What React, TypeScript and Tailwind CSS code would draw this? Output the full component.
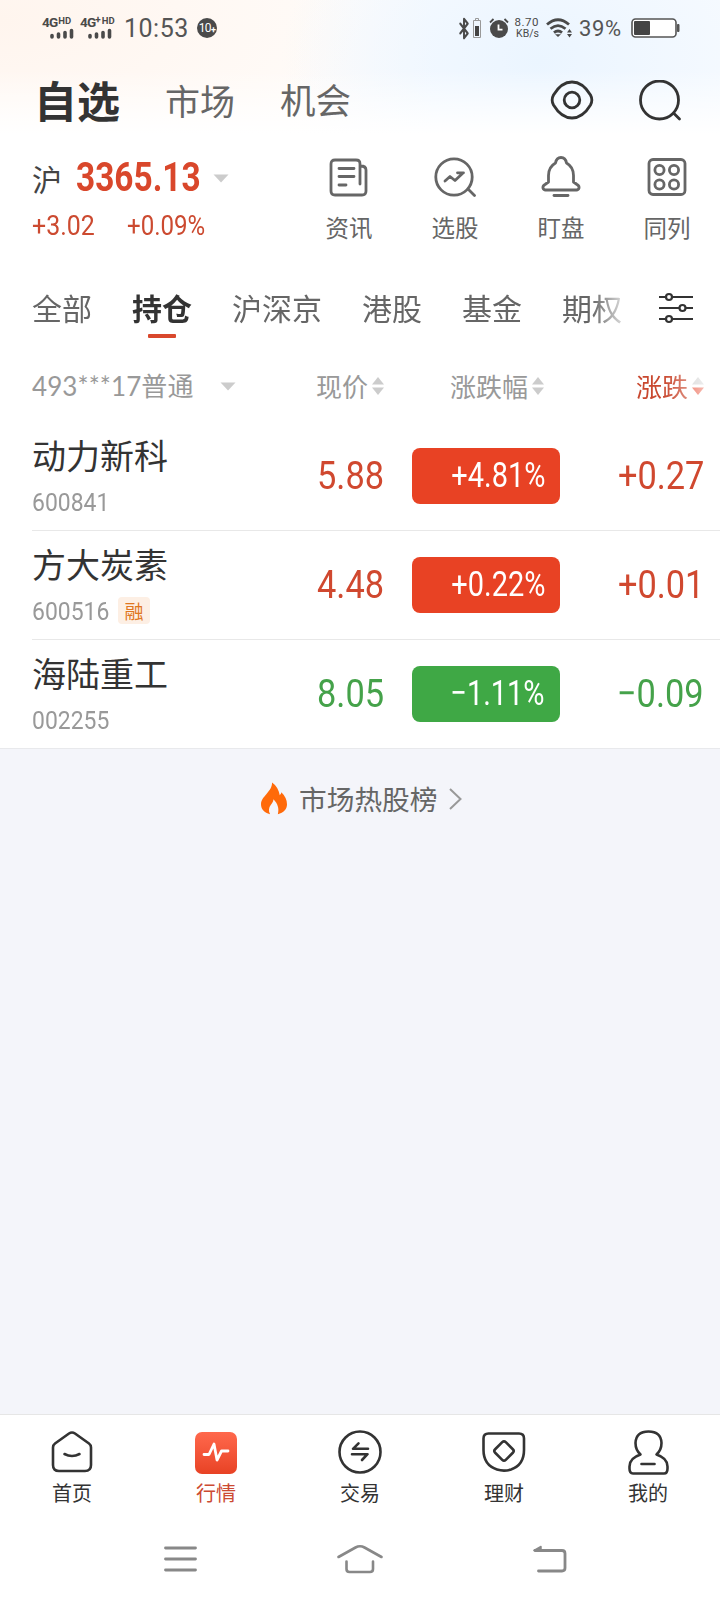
import { Bluetooth } from 'lucide-react';

const TABS = ['全部', '持仓', '沪深京', '港股', '基金', '期权'];

const STOCKS = [
  { name: '动力新科', code: '600841', price: '5.88', percent: '+4.81%', change: '+0.27', up: true, margin: false },
  { name: '方大炭素', code: '600516', price: '4.48', percent: '+0.22%', change: '+0.01', up: true, margin: true },
  { name: '海陆重工', code: '002255', price: '8.05', percent: '−1.11%', change: '−0.09', up: false, margin: false },
];

export default function App() {
  return (
    <div className="flex flex-col w-[720px] h-[1600px] bg-white overflow-hidden text-[#333] font-['Noto_Sans_CJK_SC',sans-serif] leading-none">
      {/* Top area with the soft tint */}
      <div className="h-[140px] shrink-0 bg-[linear-gradient(to_bottom,transparent_50%,#fff_96%),radial-gradient(ellipse_260px_170px_at_540px_60px,#ebf5ff,transparent),radial-gradient(ellipse_360px_160px_at_0px_20px,#fff5ee,transparent),linear-gradient(to_right,#fffbf8_40%,#f8fbff_60%)]">
        <StatusBar />
        <TopTabs />
      </div>

      <div className="flex h-[130px] shrink-0">
        <IndexSummary />
        <div className="flex">
          <Shortcut label="资讯" icon={<NewsIcon />} />
          <Shortcut label="选股" icon={<PickIcon />} />
          <Shortcut label="盯盘" icon={<BellIcon />} />
          <Shortcut label="同列" icon={<GridIcon />} />
        </div>
      </div>

      {/* Group tabs */}
      <div className="flex h-[78px] shrink-0 pl-8">
        <div className="flex gap-10 w-[590px] overflow-hidden [mask-image:linear-gradient(to_right,#000_560px,transparent_600px)]">
          {TABS.map((tab) => (
            <GroupTab key={tab} label={tab} active={tab === '持仓'} />
          ))}
        </div>
        <svg viewBox="0 0 36 32" className="w-9 h-8 mt-[22px] ml-9" fill="none" stroke="#333" strokeWidth="2.2">
          <path d="M1 5h7M14 5h21M1 16h20.500M27.500 16H35M1 27h7M14 27h21" />
          <circle cx="11" cy="5" r="3" />
          <circle cx="24.500" cy="16" r="3" />
          <circle cx="11" cy="27" r="3" />
        </svg>
      </div>

      {/* Table head */}
      <div className="flex items-center h-[74px] shrink-0 pl-8 pt-0.5 text-[26px] text-[#999]">
        <div className="flex items-center w-[284px]">
          <span className="font-['Lato','Noto_Sans_CJK_SC',sans-serif] w-[188px] tracking-[0.1px]">493***17普通</span>
          <Caret />
        </div>
        <div className="flex items-center gap-1 w-[134px]">现价<SortArrows /></div>
        <div className="flex items-center gap-1 w-[186px]">涨跌幅<SortArrows /></div>
        <div className="flex items-center gap-1 text-[#c9482f] [mask-image:linear-gradient(to_right,#000_28px,rgba(0,0,0,0.35)_70px)]">
          涨跌<SortArrows active />
        </div>
      </div>

      <div className="shrink-0">
        {STOCKS.map((stock, i) => (
          <StockRow key={stock.code} stock={stock} last={i === STOCKS.length - 1} />
        ))}
      </div>

      {/* Hot list entry */}
      <div className="flex-1 bg-[#f4f5fa] border-t border-[#e8e9ec]">
        <div className="flex items-center h-[99px] pl-[261px] text-[27.700px] text-[#666]">
          <svg viewBox="0 0 27 33" className="w-[26px] h-[33px] mr-3">
            <path
              d="M11.500 0C16 3 18.500 8 19.500 13c1.200-1 1.500-1.900 1.600-2.900C25 14 27 18 27 22.500c0 5-3.500 9-9.500 10.300 1.700-6-.3-11-4.500-15.500-.5 3-1.500 4.200-2.900 6-2 2.700-2.500 6-.7 9.500C3.500 31.500 0 27.500 0 22.500 0 18 2.500 15.500 5.500 12 9 8 11.500 5 11.500 0z"
              fill="#ff6a0a"
            />
          </svg>
          市场热股榜
          <svg viewBox="0 0 13 22" className="w-[13px] h-[22px] ml-[12px]" fill="none" stroke="#999" strokeWidth="2">
            <path d="M1 1l10.500 10L1 21" />
          </svg>
        </div>
      </div>

      {/* Bottom nav */}
      <div className="flex h-[100px] shrink-0 border-t border-[#e6e6e6] bg-white">
        <NavItem label="首页" icon={<HomeIcon />} />
        <NavItem label="行情" icon={<MarketIcon />} active />
        <NavItem label="交易" icon={<TradeIcon />} />
        <NavItem label="理财" icon={<WealthIcon />} />
        <NavItem label="我的" icon={<MineIcon />} />
      </div>

      {/* System keys */}
      <div className="flex items-center h-[86px] shrink-0 pl-[162px] pt-[3px]">
        <svg viewBox="0 0 36 30" className="w-9 h-[30px] mr-[137px]" stroke="#888" strokeWidth="2.800" strokeLinecap="round">
          <path d="M3.500 4h30M3.500 15h30M3.500 26h30" />
        </svg>
        <svg viewBox="0 0 50 32" className="w-[50px] h-8 mr-[146px]" fill="none" stroke="#888" strokeWidth="2.600" strokeLinecap="round">
          <path d="M3.500 14L20.500 4.500Q25 2 29.500 4.500L46.500 14" />
          <path d="M11.500 18.500V26q0 3 3 3H35q3 0 3-3v-7.500" />
        </svg>
        <svg viewBox="0 0 36 30" className="w-9 h-[30px]" fill="none" stroke="#888" strokeWidth="2.800" strokeLinecap="round" strokeLinejoin="round">
          <path d="M4 6.500h27q3 0 3 3V24q0 3-3 3H7.500" />
          <path d="M3 6.500L10 2.500v4z" fill="#888" strokeWidth="1.500" />
        </svg>
      </div>
    </div>
  );
}

function StatusBar() {
  return (
    <div className="flex items-center h-14 pl-[42px] text-[#4a4a4a] font-['Roboto',sans-serif]">
      <Signal net="4G" />
      <Signal net="4G⁺" />
      <span className="text-[25px] w-[73px] tracking-[0.5px] text-[#555]">10:53</span>
      <span className="flex items-center justify-center w-5 h-5 rounded-full bg-[#4a4a4a] text-white text-[12px] tracking-tighter">
        10<span className="text-[9px] font-bold mt-1">+</span>
      </span>
      <Bluetooth className="ml-[238px] w-[18px] h-[23px] shrink-0" strokeWidth={2.6} preserveAspectRatio="none" />
      <svg viewBox="0 0 8 20" className="w-2 h-5 shrink-0">
        <path d="M2.500 2V.5h3V2M.5 2.500h7v17h-7z" fill="none" stroke="#999" />
        <path d="M2 8h4v10H2z" fill="#444" />
      </svg>
      <svg viewBox="0 0 20 20" className="w-5 h-5 ml-2 shrink-0">
        <circle cx="10" cy="11" r="9" fill="#4a4a4a" />
        <path d="M1 4.500L4.500 1M19 4.500L15.500 1" stroke="#4a4a4a" strokeWidth="1.800" />
        <path d="M9.500 6.500v5.200h4" stroke="#fff" strokeWidth="1.800" fill="none" />
      </svg>
      <span className="flex flex-col items-end w-[26px] ml-1 text-[11.500px] leading-[11px] shrink-0">
        <span className="tracking-[0.5px]">8.70</span>
        <span className="text-[10.500px]">KB/s</span>
      </span>
      <svg viewBox="0 0 26 20" className="w-[26px] h-5 ml-[7px] shrink-0" fill="none" stroke="#4a4a4a" strokeWidth="2.800">
        <path d="M1 6.500Q12 -3 23 6.500M4.500 10.800Q12 4.500 19.500 10.800M8 14.600Q12 11.300 16 14.600" />
        <path d="M9 16.200h6L12 19z" fill="#4a4a4a" stroke="none" />
        <path d="M21 14.500h5L23.500 11zM21 16h5l-2.500 3.500z" fill="#4a4a4a" stroke="none" />
      </svg>
      <span className="text-[22px] ml-[7px] w-[52px] tracking-[0.6px] text-[#555] shrink-0 mt-0.5">39%</span>
      <svg viewBox="0 0 49 20" className="w-[49px] h-5 shrink-0">
        <rect x="1" y="1" width="44" height="18" rx="3.500" fill="#fff" stroke="#555" strokeWidth="1.600" />
        <rect x="3" y="3" width="16" height="14" rx="1" fill="#444" />
        <path d="M46.500 6.500h1.500v7h-1.500z" fill="#555" stroke="#555" />
      </svg>
    </div>
  );
}

function Signal({ net }: any) {
  const plus = net === '4G⁺';
  return (
    <div className={`flex flex-col h-[22px] ${plus ? 'w-[44px]' : 'w-[38px]'}`}>
      <div className="flex items-start font-bold h-[11px] leading-[11px]">
        <span className="text-[13.500px] tracking-[-0.8px]">4G</span>
        {plus && <span className="text-[10px] leading-[6px]">+</span>}
        <span className="text-[9.500px] leading-[8px] ml-[1px]">HD</span>
      </div>
      <svg viewBox="0 0 24 11" className="w-6 h-[11px] ml-2" stroke="#4a4a4a" strokeWidth="3.600" strokeLinecap="round">
        <path d="M2 7.500v1.500M8.500 6v3M15 4.500V9M21.500 2.500V9" />
      </svg>
    </div>
  );
}

function TopTabs() {
  return (
    <div className="flex items-center h-[88px] pl-[34px]">
      <h1 className="text-[43px] font-bold w-[131px] text-[#333] -mt-0.5">自选</h1>
      <span className="text-[35px] w-[115px] text-[#666] -mt-0.5">市场</span>
      <span className="text-[35.500px] w-[270px] text-[#666] -mt-0.5">机会</span>
      <svg viewBox="0 0 44 40" className="w-11 h-10" fill="none" stroke="#333" strokeWidth="2.800">
        <path d="M22 2C31 2 36 7.500 40.500 15q2.700 5 0 10C36 32.500 31 38 22 38S8 32.500 3.500 25q-2.700-5 0-10C8 7.500 13 2 22 2z" />
        <circle cx="22" cy="20" r="7.800" />
      </svg>
      <svg viewBox="0 0 44 42" className="w-11 h-[42px] ml-[44px] mt-0.5" fill="none" stroke="#333" strokeWidth="2.800" strokeLinecap="round">
        <circle cx="21.500" cy="20" r="19" />
        <path d="M36 33.500l5.500 5.500" />
      </svg>
    </div>
  );
}

function IndexSummary() {
  return (
    <div className="w-[296px] pl-8 pt-[18px]">
      <div className="flex items-center h-10">
        <span className="text-[30px] w-11 text-[#444]">沪</span>
        <span className="w-[137px]">
          <Num className="text-[40px] font-bold scale-x-[0.835] origin-left text-[#d9472b]">3365.13</Num>
        </span>
        <Caret />
      </div>
      <div className="flex items-center h-[30px] mt-[13px] text-[28px] text-[#cc4a30]">
        <span className="flex w-[95px]"><Num className="scale-x-[0.89] origin-left">+3.02</Num></span>
        <Num className="scale-x-[0.86] origin-left">+0.09%</Num>
      </div>
    </div>
  );
}

// Narrow figures for quotes, the horizontal scale comes in by class name
function Num({ children, className }: any) {
  return <span className={`inline-block whitespace-nowrap font-['Roboto',sans-serif] leading-none ${className}`}>{children}</span>;
}

function Caret() {
  return (
    <svg viewBox="0 0 16 9" className="w-4 h-[9px] shrink-0">
      <path d="M.5 .5h15L8 8.500z" fill="#ccc" />
    </svg>
  );
}

function SortArrows({ active }: any) {
  return (
    <svg viewBox="0 0 12 18" className="w-3 h-[18px] shrink-0">
      <path d="M6 0l6 7.500H0z" fill="#ccc" />
      <path d="M6 18l6-7.500H0z" fill={active ? '#e8452a' : '#ccc'} />
    </svg>
  );
}

function Shortcut({ label, icon }: any) {
  return (
    <div className="flex flex-col items-center w-[106px] pt-4 text-[#666]">
      {icon}
      <span className="text-[23.500px] mt-[18px]">{label}</span>
    </div>
  );
}

function GroupTab({ label, active }: any) {
  return (
    <div className={`flex flex-col items-center shrink-0 pt-[22px] text-[30px] ${active ? 'font-bold text-[#333]' : 'text-[#666]'}`}>
      {label}
      {active && <div className="w-7 h-1 mt-3 rounded-[1px] bg-[#d9482d]"></div>}
    </div>
  );
}

function StockRow({ stock, last }: any) {
  const color = stock.up ? 'text-[#d0482f]' : 'text-[#45a24a]';
  return (
    <div className="pl-8">
      <div className={`flex items-center pr-[16px] ${last ? 'h-[108px]' : 'h-[109px] border-b border-[#e8e8e8]'}`}>
        <div className="w-[220px]">
          <div className="text-[34px]">{stock.name}</div>
          <div className="flex items-center h-[27px] mt-4">
            <Num className="text-[26.500px] text-[#999] scale-x-[0.865] origin-left w-[86px] pt-0.5">{stock.code}</Num>
            {stock.margin && (
              <span className="flex items-center justify-center w-8 h-[27px] rounded bg-[#fdefe4] text-[19px] text-[#e0761f]">融</span>
            )}
          </div>
        </div>
        <div className="w-[132px] text-right">
          <Num className={`text-[39.500px] scale-x-[0.87] origin-right ${color}`}>{stock.price}</Num>
        </div>
        <div className={`flex items-center justify-end w-[148px] h-14 ml-[28px] pr-[15px] rounded-lg text-white ${stock.up ? 'bg-[#e84224]' : 'bg-[#3fa845]'}`}>
          <Num className="text-[35.500px] scale-x-[0.815] origin-right">{stock.percent}</Num>
        </div>
        <div className="flex-1 text-right">
          <Num className={`text-[39.500px] scale-x-[0.87] origin-right ${color}`}>{stock.change}</Num>
        </div>
      </div>
    </div>
  );
}

function NavItem({ label, icon, active }: any) {
  return (
    <div className={`flex flex-col items-center flex-1 pt-[14px] ${active ? 'text-[#cc4a32]' : 'text-[#333]'}`}>
      {icon}
      <span className="text-[20px] mt-2">{label}</span>
    </div>
  );
}

function NewsIcon() {
  return (
    <svg viewBox="0 0 42 42" className="w-[42px] h-[42px]" fill="none" stroke="currentColor" strokeWidth="2.800" strokeLinecap="round">
      <path d="M32 28V8q0-4-4-4H7Q3 4 3 8v27q0 4 4 4h27q4 0 4-4V14q0-4-5.500-4" />
      <path d="M11 12.500h15M11 20.500h15M11 29h7" />
    </svg>
  );
}

function PickIcon() {
  return (
    <svg viewBox="0 0 42 42" className="w-[42px] h-[42px]" fill="none" stroke="currentColor" strokeWidth="2.800" strokeLinecap="round" strokeLinejoin="round">
      <circle cx="20" cy="21" r="18.200" />
      <path d="M34.500 33.500l6 6" />
      <path d="M11 25l5-4.500 5 4 8-7.500M23.500 16.800h6" />
    </svg>
  );
}

function BellIcon() {
  return (
    <svg viewBox="0 0 42 42" className="w-[42px] h-[42px] overflow-visible" fill="none" stroke="currentColor" strokeWidth="2.800" strokeLinecap="round" strokeLinejoin="round">
      <path d="M8.500 26V19.500q0-8.500 7-12.500Q16.500 1.500 21 1.500T26.500 7q7 4 7 12.500V26l3.500 2.500q2.500 1.500 2 3.700-.5 1.800-2.500 1.800h-31q-2 0-2.500-1.800-.5-2.200 2-3.700z" />
      <path d="M14 39.500h14" />
    </svg>
  );
}

function GridIcon() {
  return (
    <svg viewBox="0 0 42 42" className="w-[42px] h-[42px]" fill="none" stroke="currentColor" strokeWidth="2.800">
      <rect x="3" y="3.500" width="36" height="35" rx="4" />
      <circle cx="13.500" cy="14" r="4.600" />
      <circle cx="28" cy="14" r="4.600" />
      <circle cx="13.500" cy="28.500" r="4.600" />
      <circle cx="28" cy="28.500" r="4.600" />
    </svg>
  );
}

function HomeIcon() {
  return (
    <svg viewBox="0 0 46 46" className="w-[46px] h-[46px]" fill="none" stroke="currentColor" strokeWidth="2.600" strokeLinecap="round" strokeLinejoin="round">
      <path d="M20 4.500q3-2 6 0L40 14.500q2 1.500 2 4V36q0 6-6 6H10q-6 0-6-6V18.500q0-2.500 2-4z" />
      <path d="M15.500 25q7.500 4 15 0" />
    </svg>
  );
}

function MarketIcon() {
  return (
    <div className="flex items-center justify-center w-[46px] h-[46px] pt-px">
      <div className="w-[42px] h-[42px] rounded-[7px] bg-gradient-to-b from-[#ff684c] to-[#e84224]">
        <svg viewBox="0 0 42 42" fill="none" stroke="#fff" strokeWidth="2.800" strokeLinecap="round" strokeLinejoin="round">
          <path d="M9 22.500h5l5-10.500 3 16 4.500-9H33" />
        </svg>
      </div>
    </div>
  );
}

function TradeIcon() {
  return (
    <svg viewBox="0 0 46 46" className="w-[46px] h-[46px]" fill="none" stroke="currentColor" strokeWidth="2.600" strokeLinecap="round" strokeLinejoin="round">
      <circle cx="23" cy="23" r="20.500" />
      <path d="M31 19.800H16l5.500-5.500M15 25.200h15.500L25 31" />
    </svg>
  );
}

function WealthIcon() {
  return (
    <svg viewBox="0 0 46 46" className="w-[46px] h-[46px]" fill="none" stroke="currentColor" strokeWidth="2.600" strokeLinejoin="round">
      <path d="M7.500 4.500h30.500q5 0 5 5V21q0 15-13 19.500-7 2.200-14 0Q2.500 36 2.500 21V9.500q0-5 5-5z" />
      <rect x="15.500" y="14.500" width="15" height="15" rx="2.500" transform="rotate(45 23 22)" />
    </svg>
  );
}

function MineIcon() {
  return (
    <svg viewBox="0 0 46 46" className="w-[46px] h-[46px]" fill="none" stroke="currentColor" strokeWidth="2.600" strokeLinecap="round" strokeLinejoin="round">
      <path d="M15.500 25.500Q10.500 21 10.500 14 11 2.500 23.500 2.500T36.500 14q0 7-5 11.500 11 3.500 11 12v2q0 5-3.500 5H8q-3.500 0-3.500-5v-2q0-8.500 11-12z" />
      <path d="M16.500 35h13" />
    </svg>
  );
}
